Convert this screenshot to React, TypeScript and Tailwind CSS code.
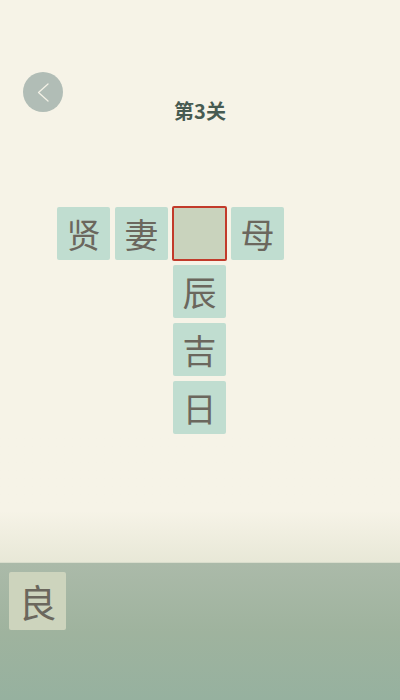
import React from 'react';

const FONT = { fontFamily: '"Noto Sans CJK SC", "Noto Sans", sans-serif' };

type Cell = { ch?: string; active?: boolean } | null;

const grid: Cell[][] = [
  [{ ch: '贤' }, { ch: '妻' }, { active: true }, { ch: '母' }],
  [null, null, { ch: '辰' }, null],
  [null, null, { ch: '吉' }, null],
  [null, null, { ch: '日' }, null],
];

const Tile: React.FC<{ cell: Cell }> = ({ cell }) => {
  if (!cell) return <div className="w-[53px] h-[53px]" />;
  if (cell.active) {
    return <div className="w-[55px] h-[55px] -m-px bg-[#c9d3bd] border-2 border-[#c23a2a] rounded-[2px]" />;
  }
  return (
    <div className="w-[53px] h-[53px] bg-[#c0ddd0] rounded-[2px] flex items-center justify-center text-[34px] leading-none text-[#6b675d]">
      {cell.ch}
    </div>
  );
};

export default function App() {
  return (
    <div className="w-[400px] h-[700px] flex flex-col bg-[#f6f3e7] overflow-hidden" style={FONT}>
      <div className="grid grid-cols-[1fr_auto_1fr] items-start pt-[72px]">
        <button className="ml-[23px] w-10 h-10 rounded-full bg-[#b1bdb6] flex items-center justify-center">
          <svg width="40" height="40" viewBox="0 0 40 40" fill="none">
            <path d="M25 12 L15.5 20.5 L25 29" stroke="#f3f1e6" strokeWidth="1.3" strokeLinecap="round" strokeLinejoin="round" />
          </svg>
        </button>
        <h1 className="mt-[29px] text-[20px] font-bold text-[#475b52] leading-none">第3关</h1>
        <div />
      </div>

      <div className="ml-[57px] mt-[86px] grid grid-cols-[repeat(4,53px)] gap-[5px]">
        {grid.flat().map((c, i) => (
          <Tile key={i} cell={c} />
        ))}
      </div>

      <div className="flex-1 bg-gradient-to-b from-[#f6f3e7] from-[60%] to-[#e8e8d7]" />

      <div className="h-[138px] bg-gradient-to-b from-[#abbaa9] via-[#9fb39e] to-[#96b19f] border-t border-[#d9ddcc] pt-[9px] pl-[9px]">
        <div className="w-[57px] h-[58px] bg-[#cdd4bd] rounded-[2px] flex items-center justify-center text-[38px] leading-none text-[#6b675d]">
          良
        </div>
      </div>
    </div>
  );
}
